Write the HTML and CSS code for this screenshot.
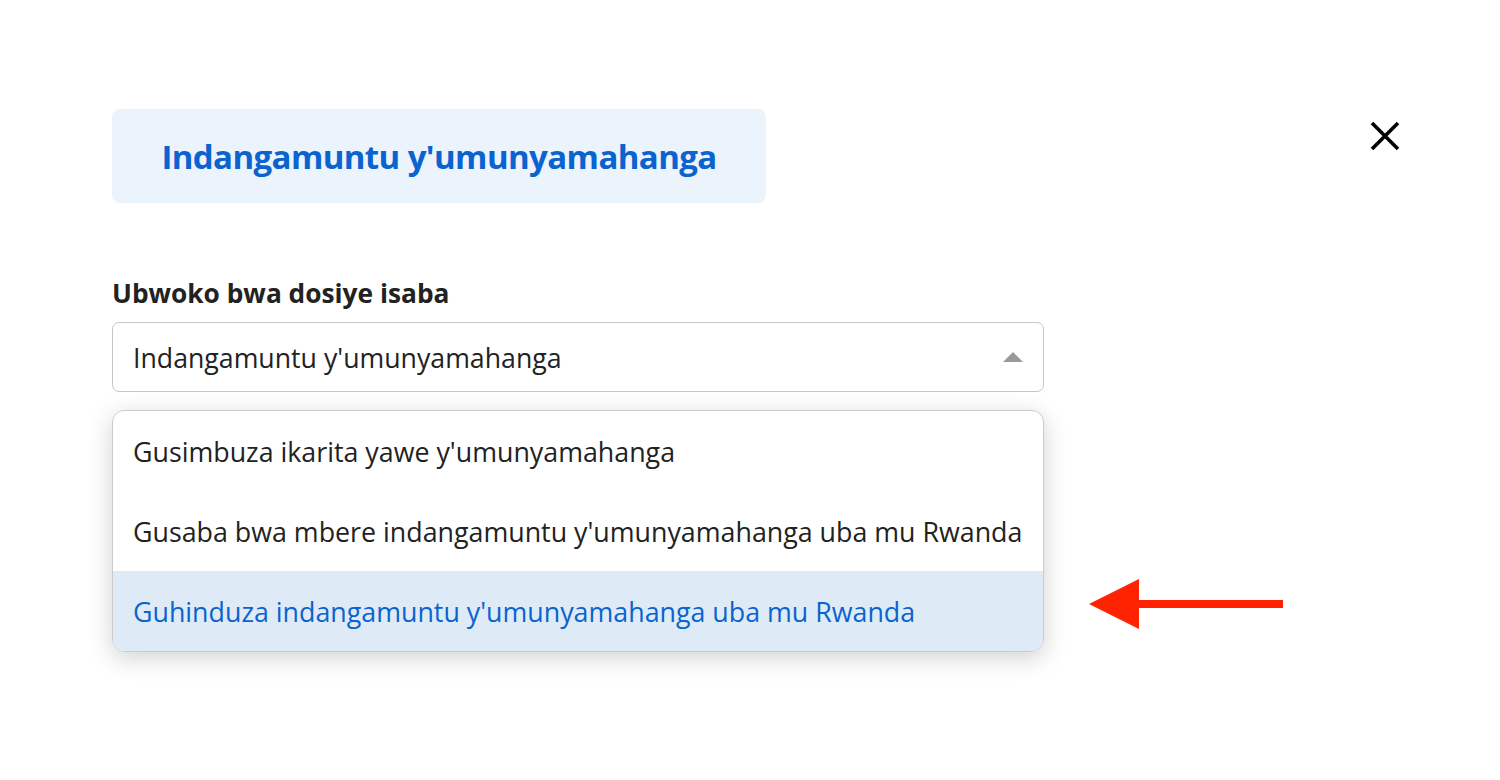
FILE: index.html
```html
<!DOCTYPE html>
<html lang="rw">
<head>
    <meta charset="UTF-8"/>
    <title>Indangamuntu y'umunyamahanga</title>
    <link rel="stylesheet" href="styles.css">
</head>
<body>
    <div class="page">
        <div class="header">
            <div class="title-box">Indangamuntu y'umunyamahanga</div>
            <button class="close-btn" aria-label="Close">
                <svg width="30" height="30" viewBox="0 0 30 30">
                    <path d="M2 2 L28 28 M28 2 L2 28" stroke="#000" stroke-width="3.6" fill="none"/>
                </svg>
            </button>
        </div>

        <div class="field">
            <label class="field-label">Ubwoko bwa dosiye isaba</label>
            <div class="select-box">
                <span>Indangamuntu y'umunyamahanga</span>
                <span class="caret"></span>
            </div>
            <div class="options-row">
                <ul class="options">
                    <li>Gusimbuza ikarita yawe y'umunyamahanga</li>
                    <li>Gusaba bwa mbere indangamuntu y'umunyamahanga uba mu Rwanda</li>
                    <li class="selected">Guhinduza indangamuntu y'umunyamahanga uba mu Rwanda</li>
                </ul>
                <svg class="pointer" width="196" height="52" viewBox="0 0 196 52">
                    <path d="M50 22 L194 22 L194 30 L50 30 Z" fill="#ff2200"/>
                    <path d="M0 26 L50 1 L50 51 Z" fill="#ff2200"/>
                </svg>
            </div>
        </div>
    </div>
</body>
</html>
```

FILE: styles.css
```css
body {
    margin: 0;
    padding: 0;
    background: #fff;
    font-family: 'Open Sans', 'Noto Sans', sans-serif;
    color: #222;
}

.page {
    padding: 109px 100px 60px 112px;
}

.header {
    display: flex;
    justify-content: space-between;
    align-items: flex-start;
}

.title-box {
    width: 654px;
    height: 94px;
    box-sizing: border-box;
    display: flex;
    align-items: center;
    justify-content: center;
    background-color: #ebf3fd;
    border-radius: 8px;
    color: #0a63cf;
    font-weight: 700;
    font-size: 33px;
    letter-spacing: -0.6px;
}

.close-btn {
    margin-top: 12px;
    padding: 0;
    border: none;
    background: none;
    width: 30px;
    height: 30px;
}

.field {
    margin-top: 74px;
}

.field-label {
    display: block;
    font-weight: 700;
    font-size: 26.3px;
    line-height: 32px;
    color: #222;
    margin-bottom: 13px;
}

.select-box {
    width: 932px;
    height: 70px;
    box-sizing: border-box;
    border: 1.5px solid #c6c6c6;
    border-radius: 7px;
    display: flex;
    align-items: center;
    justify-content: space-between;
    padding: 0 20px;
    font-size: 26.7px;
}

.caret {
    width: 0;
    height: 0;
    border-left: 10px solid transparent;
    border-right: 10px solid transparent;
    border-bottom: 10px solid #9a9a9a;
}

.options-row {
    display: flex;
    align-items: flex-start;
    margin-top: 18px;
}

.options {
    list-style: none;
    margin: 0;
    padding: 0;
    width: 932px;
    box-sizing: border-box;
    border: 1.5px solid #cbcbcb;
    border-radius: 12px;
    overflow: hidden;
    box-shadow: 0 6px 24px rgba(0, 0, 0, 0.18);
}

.options li {
    height: 80px;
    display: flex;
    align-items: center;
    padding-left: 20px;
    font-size: 26.8px;
    color: #222;
}

.options li.selected {
    background-color: #deebf7;
    color: #0a63cf;
}

.pointer {
    margin-left: 45px;
    margin-top: 168px;
}
```
